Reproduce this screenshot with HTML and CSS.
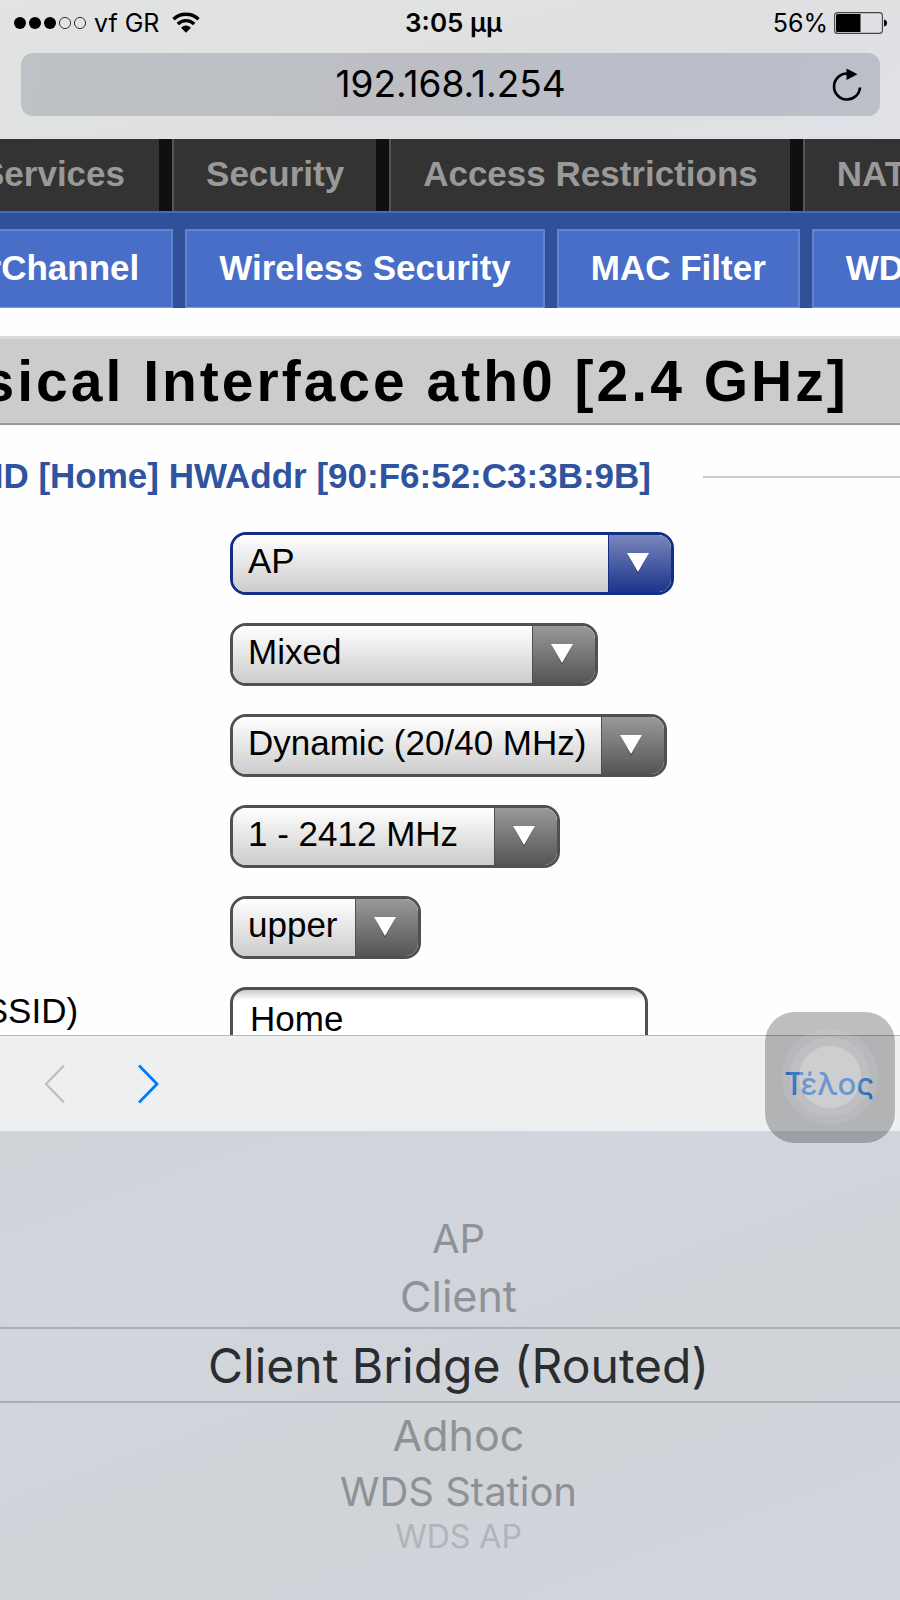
FILE: index.html
```html
<!DOCTYPE html>
<html lang="el">
<head>
<meta charset="utf-8">
<meta name="viewport" content="width=device-width, initial-scale=1">
<title>192.168.1.254</title>
<link rel="stylesheet" href="styles.css">
</head>
<body>
<div class="phone">
  <header class="chrome">
    <div class="status">
      <div class="carrier">
        <svg class="signal" width="76" height="14" viewBox="0 0 76 14" aria-hidden="true">
          <circle cx="7" cy="7" r="6"/><circle cx="22" cy="7" r="6"/><circle cx="37" cy="7" r="6"/>
          <circle class="off" cx="52" cy="7" r="5.6"/><circle class="off" cx="67" cy="7" r="5.6"/>
        </svg>
        <span>vf GR</span>
        <svg class="wifi" width="28" height="22" viewBox="0 0 28 22" aria-hidden="true">
          <path d="M1.5 7.2C8.5 .6 19.5 .6 26.500 7.200" class="arc"/>
          <path d="M5.800 12C10.500 7.500 17.500 7.500 22.200 12" class="arc"/>
          <path d="M9 15.800Q14 11.200 19 15.800L14 20.800Z"/>
        </svg>
      </div>
      <div class="clock">3:05 μμ</div>
      <div class="power">
        <span>56%</span>
        <svg width="54" height="22" viewBox="0 0 54 22" aria-hidden="true">
          <rect x=".6" y=".6" width="47.800" height="20.800" rx="3" fill="none" stroke="#444" stroke-width="1.100"/>
          <path d="M3.500 2H26.500V20H3.500Q2 20 2 18.500V3.500Q2 2 3.500 2Z"/>
          <path d="M50 7.500Q53 8 53 11T50 14.500Z"/>
        </svg>
      </div>
    </div>
    <div class="address">
      <span class="host">192.168.1.254</span>
      <button class="reload" type="button" aria-label="Reload">
        <svg width="30" height="34" viewBox="0 0 30 34" aria-hidden="true">
          <path d="M15 5.500A13 13 0 1 0 28 19.500" fill="none" stroke="#000" stroke-width="2.700"/>
          <path d="M14.500 .5L25.500 6.300L14.500 12Z"/>
        </svg>
      </button>
    </div>
  </header>

  <main class="webview">
    <nav class="menu" aria-label="Main">
      <a href="#services">Services</a>
      <a href="#security">Security</a>
      <a href="#access">Access Restrictions</a>
      <a href="#nat">NAT</a>
    </nav>
    <nav class="submenu" aria-label="Wireless">
      <a href="#super">SuperChannel</a>
      <a href="#wsec">Wireless Security</a>
      <a href="#mac">MAC Filter</a>
      <a href="#wds">WDS</a>
    </nav>
    <h1 class="title"><span>Physical Interface ath0 [2.4 GHz]</span></h1>
    <form class="settings">
      <h2 class="legend"><span>SSID [Home] HWAddr [90:F6:52:C3:3B:9B]</span></h2>
      <div class="row">
        <label for="mode">Wireless Mode</label>
        <div class="pick w-mode active"><select id="mode"><option>AP</option></select><span class="arrow"><svg width="22" height="22" viewBox="0 0 22 22"><path class="shade" d="M1 2H21L11 21Z"/><path d="M0 0H22L11 19Z"/></svg></span></div>
      </div>
      <div class="row">
        <label for="net">Wireless Network Mode</label>
        <div class="pick w-net"><select id="net"><option>Mixed</option></select><span class="arrow"><svg width="22" height="22" viewBox="0 0 22 22"><path class="shade" d="M1 2H21L11 21Z"/><path d="M0 0H22L11 19Z"/></svg></span></div>
      </div>
      <div class="row">
        <label for="width">Channel Width</label>
        <div class="pick w-width"><select id="width"><option>Dynamic (20/40 MHz)</option></select><span class="arrow"><svg width="22" height="22" viewBox="0 0 22 22"><path class="shade" d="M1 2H21L11 21Z"/><path d="M0 0H22L11 19Z"/></svg></span></div>
      </div>
      <div class="row">
        <label for="chan">Wireless Channel</label>
        <div class="pick w-chan"><select id="chan"><option>1 - 2412 MHz</option></select><span class="arrow"><svg width="22" height="22" viewBox="0 0 22 22"><path class="shade" d="M1 2H21L11 21Z"/><path d="M0 0H22L11 19Z"/></svg></span></div>
      </div>
      <div class="row">
        <label for="ext">Extension Channel</label>
        <div class="pick w-ext"><select id="ext"><option>upper</option></select><span class="arrow"><svg width="22" height="22" viewBox="0 0 22 22"><path class="shade" d="M1 2H21L11 21Z"/><path d="M0 0H22L11 19Z"/></svg></span></div>
      </div>
      <div class="row">
        <label for="ssid">Wireless Network Name (SSID)</label>
        <input class="field" id="ssid" type="text" value="Home">
      </div>
    </form>
  </main>

  <section class="keyboard">
    <div class="toolbar">
      <button type="button" class="step" disabled aria-label="Previous field">
        <svg width="22" height="40" viewBox="0 0 22 40"><path d="M20 1.500L2 20L20 38.500"/></svg>
      </button>
      <button type="button" class="step next" aria-label="Next field">
        <svg width="22" height="40" viewBox="0 0 22 40"><path d="M2 1.500L20 20L2 38.500"/></svg>
      </button>
      <button type="button" class="done">Τέλος</button>
      <div class="touch"><div class="ring outer"><div class="ring middle"><div class="ring inner"></div></div></div></div>
    </div>
    <div class="wheel">
      <button type="button" class="far">AP</button>
      <button type="button" class="near">Client</button>
      <button type="button" class="chosen">Client Bridge (Routed)</button>
      <button type="button" class="near">Adhoc</button>
      <button type="button" class="far">WDS Station</button>
      <button type="button" class="edge">WDS AP</button>
    </div>
  </section>
</div>
</body>
</html>
```
FILE: styles.css
```css
* { box-sizing: border-box; }

body {
  margin: 0;
  background: #fefefe;
  color: #000;
  font-family: "Liberation Sans", Arial, sans-serif;
  font-size: 35px;
}

button {
  margin: 0;
  padding: 0;
  border: 0;
  background: none;
  color: inherit;
  font: inherit;
}

svg { display: block; }
a { text-decoration: none; }

.phone {
  display: flex;
  flex-direction: column;
  height: 100vh;
  overflow: hidden;
}

/* Browser chrome */
.chrome {
  flex: none;
  padding: 0 20px 23px 21px;
  background: linear-gradient(165deg, #e1e4e2 0%, #e0e0e1 50%, #dfe1e6 100%);
  font-family: Inter, "Noto Sans", sans-serif;
}

.status {
  display: grid;
  grid-template-columns: 1fr auto 1fr;
  align-items: center;
  height: 53px;
  padding-bottom: 8px;
  font-size: 25px;
}

.carrier {
  display: flex;
  align-items: center;
  gap: 5px;
  margin-left: -8px;
}

.signal .off { fill: none; stroke: #333; stroke-width: 1; }
.wifi { margin-left: 8px; }
.arc { fill: none; stroke: #000; stroke-width: 3.4; }
.clock { padding-left: 6px; font-size: 26px; font-weight: 600; }

.power {
  display: flex;
  align-items: center;
  justify-content: flex-end;
  gap: 6px;
  margin-right: -8px;
}

.address {
  display: grid;
  grid-template-columns: 48px 1fr 48px;
  align-items: center;
  height: 63px;
  border-radius: 12px;
  background: linear-gradient(100deg, #bcc2c5 0%, #bdbec3 45%, #bbbeca 70%, #bcbec8 100%);
}

.host { grid-column: 2; padding-bottom: 2px; text-align: center; font-size: 37px; }

/* Router admin page */
.webview {
  flex: 1 1 0;
  min-height: 0;
  overflow: hidden;
}

.menu, .submenu {
  display: flex;
  font-weight: bold;
  white-space: nowrap;
}

.menu {
  gap: 13px;
  background: #101010;
}

.menu a {
  flex: none;
  padding: 0 32px 2px;
  border-left: 2px solid #555;
  background: #333;
  color: #999;
  line-height: 70px;
}

.menu a:first-child { margin-left: -53px; padding-right: 34px; }
.menu a:last-child { flex: 1 0 auto; }

.submenu {
  gap: 12px;
  padding-top: 16px;
  border-top: 2px solid #426ac2;
  background: #305199;
}

.submenu a {
  flex: none;
  padding: 0 32px 2px;
  border: 2px solid #6284d0;
  border-bottom: 1px solid #7f9bd9;
  background: #486ec8;
  color: #fff;
  line-height: 74px;
}

.submenu a:first-child { margin-left: -132px; }
.submenu a:last-child { flex: 1 0 auto; }

.title {
  margin: 28px 0 0;
  border-top: 3px solid #dadada;
  border-bottom: 2px solid #999;
  background: #ccc;
  font-size: 57px;
  letter-spacing: 3px;
  line-height: 84px;
  white-space: nowrap;
}

.title span { display: block; margin-left: -131px; }

.settings {
  display: flex;
  flex-direction: column;
  gap: 28px;
  padding-top: 31px;
}

.legend {
  display: flex;
  align-items: center;
  gap: 52px;
  margin: 0 0 6px -53px;
  color: #3053a0;
  font-size: 35px;
  line-height: 42px;
  white-space: nowrap;
}

.legend span { padding-bottom: 2px; line-height: 40px; }

.legend::after {
  content: "";
  flex: 1;
  height: 2px;
  background: #ccc;
}

.row {
  display: flex;
  height: 63px;
  margin-left: -412px;
}

.row label {
  flex: none;
  width: 642px;
  line-height: 48px;
  white-space: nowrap;
}

.pick {
  display: grid;
  flex: none;
  overflow: hidden;
  border: 3px solid #505050;
  border-radius: 16px;
}

.pick select {
  grid-area: 1 / 1;
  width: 100%;
  height: 57px;
  margin: 0;
  padding: 0 63px 6px 15px;
  border: 0;
  border-radius: 0;
  appearance: none;
  background: linear-gradient(#fff, #ccc);
  color: #000;
  font: inherit;
}

.arrow {
  grid-area: 1 / 1;
  justify-self: end;
  display: flex;
  align-items: center;
  justify-content: center;
  width: 63px;
  height: 57px;
  padding-right: 5px;
  border-left: 1px solid #505050;
  background: linear-gradient(#999, #555);
  pointer-events: none;
}

.arrow path { fill: #fff; }
.arrow .shade { fill: #0005; }

.active { border-color: #122e87; }
.active .arrow { border-color: #122e87; background: linear-gradient(#7986bd, #1b358a); }

.w-mode { width: 444px; }
.w-net { width: 368px; }
.w-width { width: 437px; }
.w-chan { width: 330px; }
.w-ext { width: 191px; }

.field {
  width: 418px;
  padding: 0 17px;
  border: 3px solid #505050;
  border-radius: 16px;
  background: linear-gradient(#ccc, #fff 10px);
  color: #000;
  font: inherit;
}

/* Input accessory bar and picker wheel */
.keyboard {
  flex: none;
  font-family: Inter, "Noto Sans", sans-serif;
}

.toolbar {
  position: relative;
  display: flex;
  align-items: center;
  height: 96px;
  padding: 0 26px 0 44px;
  border-top: 1px solid #b4b6b8;
  background: #eeeff1;
}

.step path { fill: none; stroke: #bfc0c1; stroke-width: 2.4; }
.next { margin-left: 71px; }
.next path { stroke: #007aff; stroke-width: 2.8; }
.done { margin-left: auto; color: #1a7df0; font-size: 31px; font-weight: 500; }

.touch {
  position: absolute;
  top: -24px;
  right: 5px;
  width: 130px;
  height: 131px;
  padding: 17px;
  border-radius: 30px;
  background: #00000040;
}

.ring { border-radius: 50%; }
.outer { padding: 8px; background: #f0f0ff1c; }
.middle { padding: 9px; background: #ffffff16; }
.inner { height: 62px; background: #ffffff3c; }

.wheel {
  display: flex;
  flex-direction: column;
  padding: 82px 0 50px;
  background: linear-gradient(160deg, #d0d3d8, #d2d5dd 30%, #d0d3d7 60%, #d1d5de);
  color: #8e9195;
}

.wheel button { padding-left: 17px; }

.near { height: 63px; font-size: 43px; }
.far { height: 51px; font-size: 40px; }
.edge { height: 33px; color: #b1b4b9; font-size: 32px; }

.chosen {
  height: 76px;
  border-top: 2px solid #aaaeb2;
  border-bottom: 2px solid #aaaeb2;
  color: #2b2c2e;
  font-size: 48px;
}
```
